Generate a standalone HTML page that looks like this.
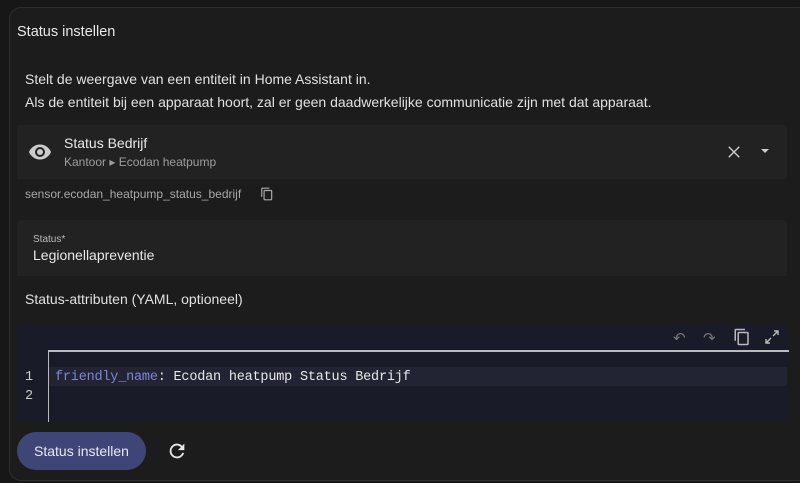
<!DOCTYPE html>
<html><head><style>
body{margin:0;width:800px;height:483px;background:#171717;font-family:"Liberation Sans",sans-serif;color:#e1e1e1;overflow:hidden;position:relative}
.card{position:absolute;left:9px;top:7px;width:800px;height:472px;border:1px solid #2e2e2e;border-radius:12px;background:#1c1c1c}
.a{position:absolute;white-space:nowrap}
</style></head><body>
<div class="card"></div>
<div class="a" style="left:17px;top:24px;font-size:14.5px;color:#e8e8e8">Status instellen</div>
<div class="a" style="left:25px;top:68px;font-size:14px;line-height:23px;color:#e1e1e1">Stelt de weergave van een entiteit in Home Assistant in.<br>Als de entiteit bij een apparaat hoort, zal er geen daadwerkelijke communicatie zijn met dat apparaat.</div>
<div class="a" style="left:17px;top:125px;width:770px;height:54px;background:#222;border-radius:4px 4px 0 0"></div>
<svg class="a" style="left:28px;top:140px" width="24" height="24" viewBox="0 0 24 24"><path fill="#ccc" d="M12,9A3,3 0 0,0 9,12A3,3 0 0,0 12,15A3,3 0 0,0 15,12A3,3 0 0,0 12,9M12,17A5,5 0 0,1 7,12A5,5 0 0,1 12,7A5,5 0 0,1 17,12A5,5 0 0,1 12,17M12,4.5C7,4.5 2.73,7.61 1,12C2.73,16.39 7,19.5 12,19.5C17,19.5 21.27,16.39 23,12C21.27,7.61 17,4.5 12,4.5Z"/></svg>
<div class="a" style="left:64px;top:135px;font-size:14px;color:#e8e8e8">Status Bedrijf</div>
<div class="a" style="left:64px;top:155px;font-size:12px;color:#9e9e9e">Kantoor ▸ Ecodan heatpump</div>
<svg class="a" style="left:727px;top:145px" width="14" height="14" viewBox="0 0 16 16"><path stroke="#ccc" stroke-width="1.6" d="M2 2L14 14M14 2L2 14"/></svg>
<div class="a" style="left:761px;top:149px;width:0;height:0;border-left:4px solid transparent;border-right:4px solid transparent;border-top:4px solid #ccc"></div>
<div class="a" style="left:25px;top:187px;font-size:12px;color:#a8a8a8">sensor.ecodan_heatpump_status_bedrijf</div>
<svg class="a" style="left:260px;top:187px" width="14" height="14" viewBox="0 0 24 24"><path fill="#aaa" d="M19,21H8V7H19M19,5H8A2,2 0 0,0 6,7V21A2,2 0 0,0 8,23H19A2,2 0 0,0 21,21V7A2,2 0 0,0 19,5M16,1H4A2,2 0 0,0 2,3V17H4V3H16V1Z"/></svg>
<div class="a" style="left:17px;top:220px;width:770px;height:56px;background:#222;border-radius:4px 4px 0 0"></div>
<div class="a" style="left:33px;top:234px;font-size:10px;color:#bbb">Status*</div>
<div class="a" style="left:33px;top:247px;font-size:14px;color:#e8e8e8">Legionellapreventie</div>
<div class="a" style="left:25px;top:291px;font-size:14px;color:#e1e1e1">Status-attributen (YAML, optioneel)</div>
<div class="a" style="left:17px;top:324px;width:770px;height:96px;background:#1a1b28"></div>
<div class="a" style="left:48px;top:350px;width:740px;height:70px;border-left:1px solid #bbb;border-top:2px solid #bbb"></div>
<div class="a" style="left:49px;top:367px;width:738px;height:19px;background:#222433"></div>
<div class="a" style="left:25px;top:368px;font-family:'Liberation Mono',monospace;font-size:13.5px;line-height:19px;color:#ccc">1<br>2</div>
<div class="a" style="left:55px;top:368px;font-family:'Liberation Mono',monospace;font-size:13.5px;letter-spacing:-0.2px;line-height:19px;color:#e8e8e8"><span style="color:#7b86d6">friendly_name</span>: Ecodan heatpump Status Bedrijf</div>
<div class="a" style="left:673px;top:329px;font-size:15px;color:#777">↶</div>
<div class="a" style="left:703px;top:329px;font-size:15px;color:#777">↷</div>
<svg class="a" style="left:733px;top:328px" width="18" height="18" viewBox="0 0 24 24"><path fill="#bbb" d="M19,21H8V7H19M19,5H8A2,2 0 0,0 6,7V21A2,2 0 0,0 8,23H19A2,2 0 0,0 21,21V7A2,2 0 0,0 19,5M16,1H4A2,2 0 0,0 2,3V17H4V3H16V1Z"/></svg>
<svg class="a" style="left:765px;top:330px" width="14" height="14" viewBox="0 0 14 14"><path stroke="#bbb" stroke-width="1.4" fill="none" d="M9 1H13V5M13 1L8 6M5 13H1V9M1 13L6 8"/></svg>
<div class="a" style="left:17px;top:432px;width:129px;height:38px;border-radius:19px;background:#3f4577;color:#e8e8f4;font-size:14px;line-height:38px;text-align:center">Status instellen</div>
<svg class="a" style="left:166px;top:440px" width="22" height="22" viewBox="0 0 24 24"><path fill="#e8e8e8" d="M17.65,6.35C16.2,4.9 14.21,4 12,4A8,8 0 0,0 4,12A8,8 0 0,0 12,20C15.73,20 18.84,17.450 19.73,14H17.65C16.83,16.33 14.61,18 12,18A6,6 0 0,1 6,12A6,6 0 0,1 12,6C13.66,6 15.14,6.69 16.22,7.780L13,11H20V4L17.65,6.35Z"/></svg>
</body></html>
